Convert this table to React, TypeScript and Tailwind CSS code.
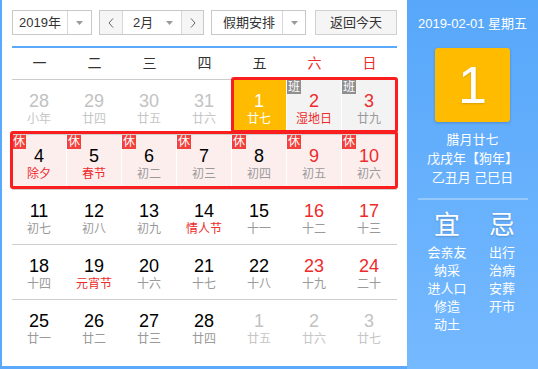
import React from "react";

type Cell = {
  d: string;
  l: string;
  other?: boolean;
  redNum?: boolean;
  redLunar?: boolean;
  today?: boolean;
  ban?: boolean;
  xiu?: boolean;
};

const rows: Cell[][] = [
  [
    { d: "28", l: "小年", other: true },
    { d: "29", l: "廿四", other: true },
    { d: "30", l: "廿五", other: true },
    { d: "31", l: "廿六", other: true },
    { d: "1", l: "廿七", today: true },
    { d: "2", l: "湿地日", ban: true, redNum: true, redLunar: true },
    { d: "3", l: "廿九", ban: true, redNum: true },
  ],
  [
    { d: "4", l: "除夕", xiu: true, redLunar: true },
    { d: "5", l: "春节", xiu: true, redLunar: true },
    { d: "6", l: "初二", xiu: true },
    { d: "7", l: "初三", xiu: true },
    { d: "8", l: "初四", xiu: true },
    { d: "9", l: "初五", xiu: true, redNum: true },
    { d: "10", l: "初六", xiu: true, redNum: true },
  ],
  [
    { d: "11", l: "初七" },
    { d: "12", l: "初八" },
    { d: "13", l: "初九" },
    { d: "14", l: "情人节", redLunar: true },
    { d: "15", l: "十一" },
    { d: "16", l: "十二", redNum: true },
    { d: "17", l: "十三", redNum: true },
  ],
  [
    { d: "18", l: "十四" },
    { d: "19", l: "元宵节", redLunar: true },
    { d: "20", l: "十六" },
    { d: "21", l: "十七" },
    { d: "22", l: "十八" },
    { d: "23", l: "十九", redNum: true },
    { d: "24", l: "二十", redNum: true },
  ],
  [
    { d: "25", l: "廿一" },
    { d: "26", l: "廿二" },
    { d: "27", l: "廿三" },
    { d: "28", l: "廿四" },
    { d: "1", l: "廿五", other: true },
    { d: "2", l: "廿六", other: true },
    { d: "3", l: "廿七", other: true },
  ],
];

const Tri = () => (
  <svg width="7" height="4" viewBox="0 0 7 4">
    <path d="M0 0 L7 0 L3.5 4 Z" fill="#9a9a9a" />
  </svg>
);

function DayCell({ c }: { c: Cell }) {
  let bg = "";
  if (c.today) bg = "bg-[#ffbb00]";
  else if (c.ban) bg = "bg-[#f3f3f3]";
  else if (c.xiu) bg = "bg-[#fdeeee]";
  let numColor = "text-black";
  if (c.other) numColor = "text-[#c2c2c2]";
  else if (c.today) numColor = "text-white";
  else if (c.redNum) numColor = "text-[#ee2b2b]";
  let lunColor = "text-[#9a9a9a]";
  if (c.other) lunColor = "text-[#c6c6c6]";
  else if (c.today) lunColor = "text-white";
  else if (c.redLunar) lunColor = "text-[#ee2b2b]";
  return (
    <div className={`relative w-[55px] h-full flex flex-col items-center pt-[11px] border-r border-white ${bg}`}>
      {c.ban && (
        <span className="absolute left-0 top-0 w-[14px] h-[14px] bg-[#8f8f8f] text-white text-[12px] leading-[14px] text-center">
          班
        </span>
      )}
      {c.xiu && (
        <span className="absolute left-0 top-0 w-[14px] h-[14px] bg-[#f2403c] text-white text-[12px] leading-[14px] text-center">
          休
        </span>
      )}
      <div className={`text-[18px] leading-[20px] ${numColor}`}>{c.d}</div>
      <div className={`text-[12px] leading-[16px] ${lunColor}`}>{c.l}</div>
    </div>
  );
}

export default function App() {
  return (
    <div className="w-[538px] h-[369px] flex font-['Liberation_Sans','Noto_Sans_CJK_SC',sans-serif] overflow-hidden">
      {/* Left calendar panel */}
      <div className="w-[407px] h-[369px] bg-white border-l-2 border-b-[3px] border-[#5aa9fa] pl-[10px] pt-[10px]">
        {/* Top bar */}
        <div className="flex items-center h-[25px] text-[13px] text-[#333]">
          <div className="w-[80px] h-[25px] border border-[#c8c8c8] flex">
            <div className="w-[55px] flex items-center justify-center border-r border-[#d8d8d8]">2019年</div>
            <div className="flex-1 flex items-center justify-center">
              <Tri />
            </div>
          </div>
          <div className="ml-[7px] w-[105px] h-[25px] border border-[#c8c8c8] flex">
            <div className="w-[23px] bg-[#f5f5f5] border-r border-[#d8d8d8] flex items-center justify-center">
              <svg width="6" height="10" viewBox="0 0 6 10">
                <path d="M5 0.5 L1 5 L5 9.5" stroke="#666" strokeWidth="1" fill="none" />
              </svg>
            </div>
            <div className="flex-1 flex items-center pl-[10px]">
              <span>2月</span>
              <span className="ml-[13px] flex">
                <Tri />
              </span>
            </div>
            <div className="w-[22px] bg-[#f5f5f5] border-l border-[#d8d8d8] flex items-center justify-center">
              <svg width="6" height="10" viewBox="0 0 6 10">
                <path d="M1 0.5 L5 5 L1 9.5" stroke="#666" strokeWidth="1" fill="none" />
              </svg>
            </div>
          </div>
          <div className="ml-[7px] w-[95px] h-[25px] border border-[#c8c8c8] flex">
            <div className="w-[71px] flex items-center pl-[11px] border-r border-[#d8d8d8]">假期安排</div>
            <div className="flex-1 flex items-center justify-center">
              <Tri />
            </div>
          </div>
          <div className="ml-[9px] w-[82px] h-[25px] border border-[#d0d0d0] bg-[#f5f5f5] flex items-center justify-center">
            返回今天
          </div>
        </div>
        {/* blue line */}
        <div className="mt-[11px] w-[385px] h-[2px] bg-[#5aa9fa]" />
        {/* Weekday header */}
        <div className="w-[385px] h-[32px] flex items-center text-[14px] border-b border-[#cccccc] pb-[1px]">
          {["一", "二", "三", "四", "五", "六", "日"].map((w, i) => (
            <div key={i} className={`w-[55px] text-center ${i >= 5 ? "text-[#ee2b2b]" : "text-[#333]"}`}>
              {w}
            </div>
          ))}
        </div>
        {/* Grid */}
        <div className="relative w-[385px]">
          {rows.map((r, ri) => (
            <div
              key={ri}
              className={`flex h-[55px] ${ri < 4 ? "border-b border-[#cfcfcf]" : ""}`}
            >
              {r.map((c, ci) => (
                <DayCell key={ci} c={c} />
              ))}
            </div>
          ))}
          <div className="absolute left-[219px] top-[-3px] w-[167px] h-[56px] border-[3px] border-[#fb1e1e] rounded-[3px]" />
          <div className="absolute left-[-2px] top-[51px] w-[388px] h-[58px] border-[3px] border-[#fb1e1e] rounded-[3px]" />
        </div>
      </div>
      {/* Right panel */}
      <div className="w-[131px] h-[369px] bg-gradient-to-b from-[#57a7fa] to-[#75b9ff] flex flex-col items-center text-white pt-[16px]">
        <div className="text-[13px] leading-[16px]">2019-02-01 星期五</div>
        <div className="mt-[16px] w-[75px] h-[74px] bg-[#ffbb00] rounded-[3px] shadow-[0_1px_3px_rgba(0,0,0,0.2)] flex items-center justify-center text-[52px] leading-none [text-shadow:0_1px_2px_rgba(0,0,0,0.15)]">
          1
        </div>
        <div className="mt-[8px] text-[13px] leading-[19px] text-center">
          <div>腊月廿七</div>
          <div>戊戌年【狗年】</div>
          <div>乙丑月 己巳日</div>
        </div>
        <div className="mt-[11px] w-[110px] h-[2px] bg-[rgba(255,255,255,0.3)]" />
        <div className="mt-[10px] flex ml-[4px]">
          <div className="w-[55px] flex flex-col items-center">
            <div className="text-[26px] leading-[30px] [text-shadow:0_1px_2px_rgba(0,0,0,0.2)]">宜</div>
            <div className="mt-[4px] text-[13px] leading-[18px] text-center">
              <div>会亲友</div>
              <div>纳采</div>
              <div>进人口</div>
              <div>修造</div>
              <div>动土</div>
            </div>
          </div>
          <div className="w-[55px] flex flex-col items-center">
            <div className="text-[26px] leading-[30px] [text-shadow:0_1px_2px_rgba(0,0,0,0.2)]">忌</div>
            <div className="mt-[4px] text-[13px] leading-[18px] text-center">
              <div>出行</div>
              <div>治病</div>
              <div>安葬</div>
              <div>开市</div>
            </div>
          </div>
        </div>
      </div>
    </div>
  );
}
